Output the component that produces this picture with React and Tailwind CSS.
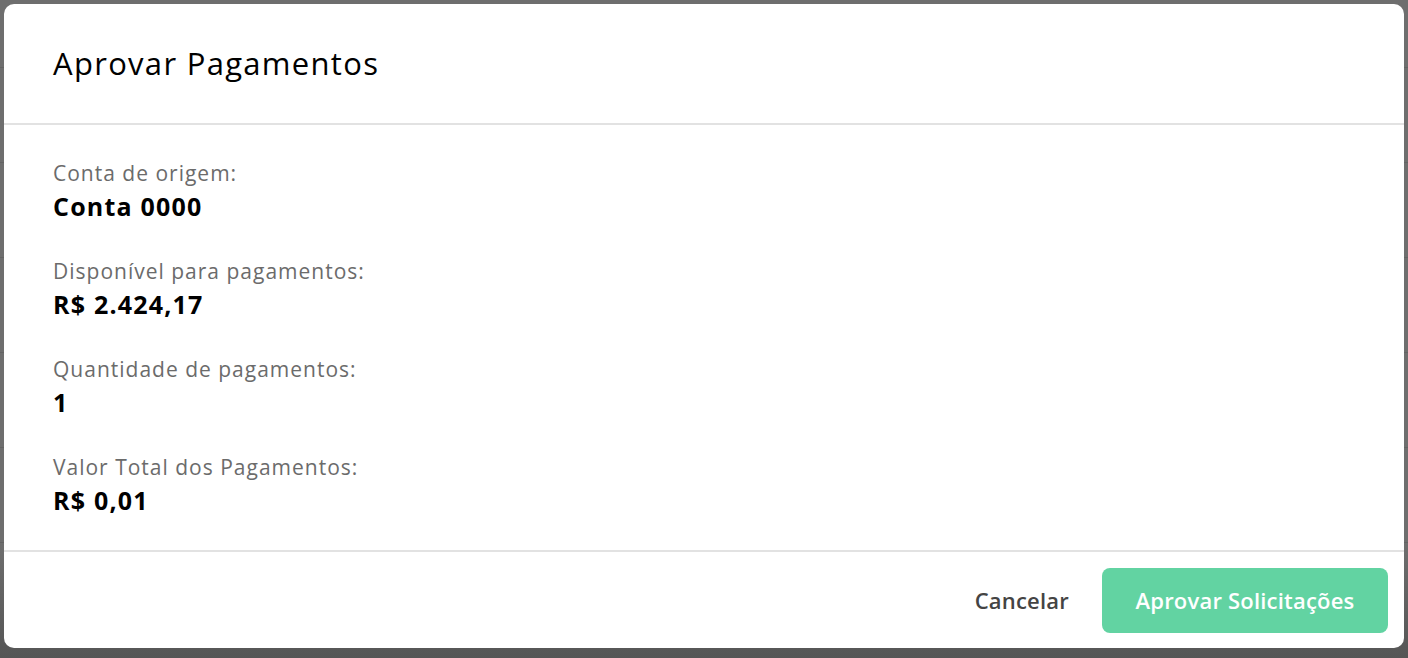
export default function App() {
  const items = [
    ["Conta de origem:", "Conta 0000"],
    ["Disponível para pagamentos:", "R$ 2.424,17"],
    ["Quantidade de pagamentos:", "1"],
    ["Valor Total dos Pagamentos:", "R$ 0,01"],
  ];
  return (
    <div className="relative w-[1408px] h-[658px] overflow-hidden bg-[#6e6e6e] p-[4px]" style={{ fontFamily: "'Open Sans', 'Noto Sans', sans-serif" }}>
      <div className="absolute inset-0 flex flex-col pointer-events-none">
        <div className="h-[68px] border-b border-[#636363]" />
        <div className="h-[95px] border-b border-[#636363]" />
        <div className="h-[95px] border-b border-[#636363]" />
        <div className="h-[95px] border-b border-[#636363]" />
        <div className="h-[95px] border-b border-[#636363]" />
        <div className="h-[95px] border-b border-[#636363]" />
        <div className="flex-1 bg-gradient-to-b from-transparent to-[#555555]" />
      </div>
      <div className="relative w-[1400px] h-[644px] bg-white rounded-[10px] flex flex-col">
        <div className="h-[121px] flex items-center px-[49px] border-b-2 border-[#e2e2e2]">
          <h1 className="text-[31px] leading-none text-black tracking-[1.3px]">Aprovar Pagamentos</h1>
        </div>
        <div className="flex flex-col gap-[35px] pt-[34px] pb-[34px] px-[49px] border-b-2 border-[#e2e2e2]">
          {items.map(([l, v]) => (
            <div key={l} className="flex flex-col gap-[3px]">
              <div className="text-[21px] leading-[28px] text-[#6b6b6b] tracking-[1px]">{l}</div>
              <div className="text-[25px] leading-[32px] font-bold text-black tracking-[1.2px]">{v}</div>
            </div>
          ))}
        </div>
        <div className="flex-1 flex items-center justify-end gap-[33px] pr-[16px]">
          <button className="text-[22px] text-[#444444] font-semibold tracking-[0.2px]">Cancelar</button>
          <button className="w-[286px] h-[65px] rounded-[8px] bg-[#62d3a2] text-white text-[22px] font-semibold tracking-[0.2px]">Aprovar Solicitações</button>
        </div>
      </div>
    </div>
  );
}
